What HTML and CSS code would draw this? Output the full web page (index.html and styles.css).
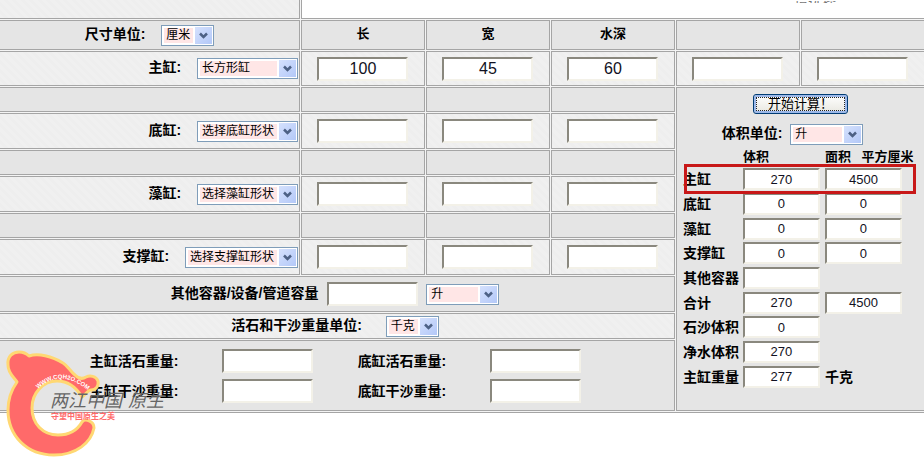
FILE: index.html
```html
<!DOCTYPE html>
<html lang="zh-CN">
<head>
	<meta charset="utf-8">
	<meta name="viewport" content="width=device-width, initial-scale=1">
	<title>鱼缸容积计算</title>
	<link rel="stylesheet" href="styles.css">
</head>
<body>
<form class="calc" onsubmit="return false">
	<table class="sheet">
		<colgroup>
			<col>
			<col class="num"><col class="num"><col class="num"><col class="num"><col class="num">
		</colgroup>
		<tr class="first light">
			<td></td>
			<td class="intro" colspan="5"><div class="note">请选择</div></td>
		</tr>
		<tr class="head">
			<td class="mid">
				<label for="lenUnit">尺寸单位:</label>
				<select id="lenUnit" class="w-s"><option>厘米</option><option>英寸</option></select>
			</td>
			<th>长</th>
			<th>宽</th>
			<th>水深</th>
			<th></th>
			<th></th>
		</tr>
		<tr class="light main">
			<td class="shape">
				<label for="shape1">主缸:</label>
				<select id="shape1" class="w-l"><option>长方形缸</option></select>
			</td>
			<td><input type="text" aria-label="主缸长" value="100"></td>
			<td><input type="text" aria-label="主缸宽" value="45"></td>
			<td><input type="text" aria-label="主缸水深" value="60"></td>
			<td><input type="text" aria-label="主缸尺寸4"></td>
			<td><input type="text" aria-label="主缸尺寸5"></td>
		</tr>
		<tr class="blank">
			<td></td><td></td><td></td><td></td>
			<td class="result" colspan="2" rowspan="9">
				<div class="go"><button type="submit">开始计算！</button></div>
				<div class="unit">
					<label for="volUnit">体积单位:</label>
					<select id="volUnit" class="w-m"><option>升</option></select>
				</div>
				<table class="totals">
					<colgroup><col class="c1"><col class="c2"><col></colgroup>
					<tr class="caption"><td></td><th>体积</th><th>面积 <span>平方厘米</span></th></tr>
					<tr class="marked">
						<td><label for="v1">主缸</label></td>
						<td><input id="v1" type="text" value="270"></td>
						<td><input type="text" aria-label="主缸面积" value="4500"></td>
					</tr>
					<tr>
						<td><label for="v2">底缸</label></td>
						<td><input id="v2" type="text" value="0"></td>
						<td><input type="text" aria-label="底缸面积" value="0"></td>
					</tr>
					<tr>
						<td><label for="v3">藻缸</label></td>
						<td><input id="v3" type="text" value="0"></td>
						<td><input type="text" aria-label="藻缸面积" value="0"></td>
					</tr>
					<tr>
						<td><label for="v4">支撑缸</label></td>
						<td><input id="v4" type="text" value="0"></td>
						<td><input type="text" aria-label="支撑缸面积" value="0"></td>
					</tr>
					<tr>
						<td><label for="v5">其他容器</label></td>
						<td><input id="v5" type="text"></td>
						<td></td>
					</tr>
					<tr>
						<td><label for="v6">合计</label></td>
						<td><input id="v6" type="text" value="270"></td>
						<td><input type="text" aria-label="合计面积" value="4500"></td>
					</tr>
					<tr>
						<td><label for="v7">石沙体积</label></td>
						<td><input id="v7" type="text" value="0"></td>
						<td></td>
					</tr>
					<tr>
						<td><label for="v8">净水体积</label></td>
						<td><input id="v8" type="text" value="270"></td>
						<td></td>
					</tr>
					<tr>
						<td><label for="v9">主缸重量</label></td>
						<td><input id="v9" type="text" value="277"></td>
						<td class="kg">千克</td>
					</tr>
				</table>
			</td>
		</tr>
		<tr class="light tank">
			<td class="shape">
				<label for="shape2">底缸:</label>
				<select id="shape2" class="w-l"><option>选择底缸形状</option></select>
			</td>
			<td><input type="text" aria-label="底缸长"></td>
			<td><input type="text" aria-label="底缸宽"></td>
			<td><input type="text" aria-label="底缸水深"></td>
		</tr>
		<tr class="blank"><td></td><td></td><td></td><td></td></tr>
		<tr class="light tank">
			<td class="shape">
				<label for="shape3">藻缸:</label>
				<select id="shape3" class="w-l"><option>选择藻缸形状</option></select>
			</td>
			<td><input type="text" aria-label="藻缸长"></td>
			<td><input type="text" aria-label="藻缸宽"></td>
			<td><input type="text" aria-label="藻缸水深"></td>
		</tr>
		<tr class="blank"><td></td><td></td><td></td><td></td></tr>
		<tr class="light tank">
			<td class="shape">
				<label for="shape4">支撑缸:</label>
				<select id="shape4" class="w-xl"><option>选择支撑缸形状</option></select>
			</td>
			<td><input type="text" aria-label="支撑缸长"></td>
			<td><input type="text" aria-label="支撑缸宽"></td>
			<td><input type="text" aria-label="支撑缸水深"></td>
		</tr>
		<tr class="other">
			<td class="mid" colspan="4">
				<label for="other">其他容器/设备/管道容量</label>
				<input id="other" type="text">
				<select class="w-m" aria-label="容量单位"><option>升</option></select>
			</td>
		</tr>
		<tr class="light weight">
			<td class="mid" colspan="4">
				<label for="kgUnit">活石和干沙重量单位:</label>
				<select id="kgUnit" class="w-s"><option>千克</option></select>
			</td>
		</tr>
		<tr class="stones">
			<td colspan="4">
				<table class="rocks">
					<tr>
						<td><label for="r1">主缸活石重量:</label></td>
						<td><input id="r1" type="text"></td>
						<td><label for="r2">底缸活石重量:</label></td>
						<td><input id="r2" type="text"></td>
					</tr>
					<tr>
						<td><label for="r3">主缸干沙重量:</label></td>
						<td><input id="r3" type="text"></td>
						<td><label for="r4">底缸干沙重量:</label></td>
						<td><input id="r4" type="text"></td>
					</tr>
				</table>
			</td>
		</tr>
	</table>

	<svg class="logo" width="170" height="113" viewBox="0 0 170 113" role="img" aria-label="两江中国原生">
		<path class="dragon" d="M17 34 C15 30 8 26 8 17 C7 8 13 4 19 4 C24 4 27 6 29 8 C38 5 52 8 63 15 C68 18 70 23 75 27 C79 31 83 31 86 29 C90 27 96 28 98 33 C99 38 96 42 91 42 C88 42 86 46 82 49 C76 39 67 33 57 33 C43 33 32 45 32 60 C32 76 43 87 58 87 C70 87 78 81 82 74 C85 70 94 73 94 80 C91 95 76 107 54 107 C27 107 8 88 8 62 C8 50 12 41 17 34 Z"/>
		<path id="arc" fill="none" d="M38 41 Q62 18 92 46"/>
		<text class="site"><textPath href="#arc">WWW.CQH2O.COM</textPath></text>
		<text class="brand" y="59"><tspan x="50">两江中国</tspan><tspan x="128">原生</tspan></text>
		<text class="motto" x="51" y="71">守望中国原生之美</text>
	</svg>
</form>
</body>
</html>
```
FILE: styles.css
```css
body {
	margin: 0;
	background: #fff;
	font-family: "Liberation Sans", "Noto Sans CJK SC", sans-serif;
	font-size: 14px;
	line-height: 18px;
	color: #000;
}
.calc {
	position: relative;
	padding-bottom: 50px;
	overflow: hidden;
}

/* outer grid */
.sheet {
	table-layout: fixed;
	width: calc(100% + 3px);
	margin: -1px 0 0 -1px;
	border-spacing: 1px;
	background: #f4f4f4;
	border-bottom: 1px solid #a5a5a5;
}
.sheet td, .sheet th {
	box-sizing: border-box;
	padding: 0;
	text-align: center;
	vertical-align: middle;
}
.sheet > tbody > tr > td,
.sheet > tbody > tr > th {
	border: 1px solid #a5a5a5;
	background: #e5e5e5;
}
.sheet > tbody > tr.light > td {
	background: repeating-linear-gradient(45deg, #f0f0f0 0, #f0f0f0 3px, #eee 3px, #eee 6px);
}
.sheet > tbody > tr > td:first-child { border-left: 0; }
.sheet > tbody > tr > td:first-child + td { border-left: 1px solid #a5a5a5; }
.num { width: 124px; }
.first { height: 19px; }
.head { height: 30px; }
.main { height: 35px; }
.blank { height: 25px; }
.tank, .other { height: 36px; }
.weight { height: 26px; }
.stones { height: 71px; }
.sheet > tbody > .first > td { border-top: 0; }
.sheet > tbody > .first > .intro { background: #fff; }
.note {
	display: flex;
	align-items: flex-end;
	height: 2px;
	margin: 0 0 14px 492px;
	overflow: hidden;
	line-height: 2px;
	color: #777;
}
.sheet .head th {
	padding-bottom: 3px;
	font-size: 13px;
}
label, .kg { font-weight: bold; }

.mid label, .shape label { margin-right: 12px; }
.sheet .shape {
	text-align: right;
	padding-right: 1px;
}

/* controls */
input {
	box-sizing: border-box;
	width: 91px;
	height: 24px;
	padding: 0;
	border: 2px solid;
	border-color: #8a887e #f3f1e8 #f3f1e8 #8a887e;
	background: #fff;
	font: 16px "Liberation Sans", sans-serif;
	text-align: center;
	color: #112;
	vertical-align: middle;
}
select {
	appearance: none;
	box-sizing: border-box;
	height: 21px;
	padding: 0 0 0 4px;
	border: 1px solid #7f9db9;
	border-radius: 0;
	font: 12px/19px "Liberation Sans", "Noto Sans CJK SC", sans-serif;
	color: #000;
	vertical-align: middle;
	background:
		url("data:image/svg+xml,%3Csvg xmlns='http://www.w3.org/2000/svg' width='17' height='17'%3E%3Cpath d='M5 6.500l3.500 3.500 3.500-3.500' fill='none' stroke='%234d6185' stroke-width='2.500'/%3E%3C/svg%3E") right 1px top 1px / 17px 17px no-repeat,
		linear-gradient(135deg, #d5e1fd, #b3c8f8) right 1px top 1px / 17px 17px no-repeat,
		linear-gradient(#fff, #fff) right 0 top 0 / 20px 19px no-repeat,
		linear-gradient(#ffe6e6, #ffe6e6) 2px 2px / 100% 15px no-repeat,
		#fff;
}
.w-s { width: 53px; }
.w-m { width: 73px; }
.w-l { width: 101px; }
.w-xl { width: 113px; }
button {
	width: 95px;
	height: 20px;
	padding: 0;
	border: 1px solid #003c74;
	border-radius: 3px;
	background: linear-gradient(#fff, #e8e7e0);
	box-shadow: inset 0 0 0 2px #9db9ea;
	outline: 1px dotted #222;
	outline-offset: -4px;
	font: 13px/16px "Liberation Sans", "Noto Sans CJK SC", sans-serif;
	color: #000;
}
.other label { margin-right: 5px; }
.other input { margin-right: 4px; }
.weight label { margin-right: 20px; }
.sheet > tbody > .other > td,
.sheet > tbody > .weight > td,
.sheet > tbody > .stones > td { padding-right: 4px; }

/* results */
.sheet > tbody > tr > .result {
	padding: 6px 0 0 6px;
	vertical-align: top;
}
.go {
	height: 29px;
	padding-right: 6px;
	line-height: 20px;
}
.go button { vertical-align: top; }
.unit {
	height: 24px;
	padding-right: 22px;
	line-height: 21px;
}
.unit label { margin-right: 4px; }
.totals {
	table-layout: fixed;
	width: 100%;
	height: 242px;
	border-spacing: 0;
}
.totals .c1 { width: 60px; }
.totals .c2 { width: 82px; }
.totals td, .totals th {
	text-align: left;
	white-space: nowrap;
}
.totals input {
	display: block;
	width: 77px;
	height: 22px;
	font-size: 13px;
}
.caption { height: 20px; }
.totals th { font-size: 13px; }
.totals th span { margin-left: 7px; }
.marked { position: relative; }
.marked::after {
	content: "";
	position: absolute;
	top: -3px;
	right: 8px;
	bottom: -2px;
	left: 1px;
	border: 3px solid #c81818;
}

/* rock and sand weights */
.rocks {
	table-layout: fixed;
	width: 80%;
	margin: 0 auto;
	border-spacing: 0;
}
.rocks td { height: 30px; }

.logo {
	position: absolute;
	left: 0;
	bottom: 2px;
}
.dragon {
	fill: #ff6a6a;
	stroke: #ffd873;
	stroke-width: 3;
	stroke-linejoin: round;
}
.site {
	font: bold 6px "Liberation Sans", sans-serif;
	fill: #fff;
}
.brand {
	font: italic 18px "Noto Sans CJK SC", sans-serif;
	fill: #666;
}
.motto {
	font: bold 8px "Noto Sans CJK SC", sans-serif;
	fill: #ff6a6a;
}
```
